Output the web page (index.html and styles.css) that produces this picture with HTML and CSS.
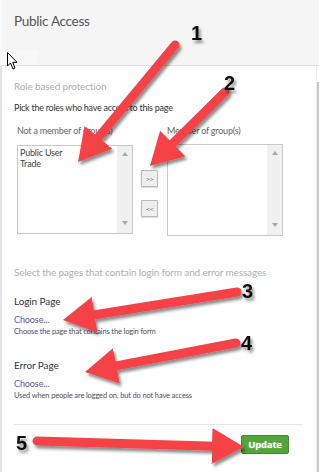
FILE: index.html
```html
<!DOCTYPE html>
<html>
<head>
<meta charset="utf-8">
<link rel="stylesheet" href="styles.css">
</head>
<body>
<div class="page">
  <header class="hd"><h1 class="title">Public Access</h1></header>
  <div class="main">
    <div class="content">
      <div class="section-title">Role based protection</div>
      <div class="intro">Pick the roles who have access to this page</div>
      <div class="groups">
        <div class="col">
          <div class="col-label">Not a member of group(s)</div>
          <div class="listbox lb-left">
            <div class="items">
              <div class="item">Public User</div>
              <div class="item">Trade</div>
            </div>
            <div class="sb"><span class="up"></span><span class="down"></span></div>
          </div>
        </div>
        <div class="moves">
          <button class="mv">&gt;&gt;</button>
          <button class="mv">&lt;&lt;</button>
        </div>
        <div class="col">
          <div class="col-label">Member of group(s)</div>
          <div class="listbox lb-right">
            <div class="items"></div>
            <div class="sb"><span class="up"></span><span class="down"></span></div>
          </div>
        </div>
      </div>
      <div class="section-title st2">Select the pages that contain login form and error messages</div>
      <div class="field">
        <div class="field-label">Login Page</div>
        <div class="choose">Choose...</div>
        <div class="help">Choose the page that contains the login form</div>
      </div>
      <div class="field f2">
        <div class="field-label">Error Page</div>
        <div class="choose">Choose...</div>
        <div class="help">Used when people are logged on, but do not have access</div>
      </div>
      <hr class="rule">
      <div class="actions"><button class="update">Update</button></div>
    </div>
    <div class="track"><div class="thumb"></div></div>
  </div>

  <div class="ghost"></div>
  <svg class="overlay" width="319" height="472" viewBox="0 0 319 472">
    <defs>
      <filter id="sh" x="-20%" y="-20%" width="140%" height="140%">
        <feDropShadow dx="2" dy="3" stdDeviation="1.8" flood-color="#000" flood-opacity="0.45"/>
      </filter>
      <marker id="head" viewBox="0 0 32 36" refX="12" refY="18" markerWidth="32" markerHeight="36" markerUnits="userSpaceOnUse" orient="auto">
        <path d="M0,0 L32,18 L0,36 z" fill="#f44347"/>
      </marker>
    </defs>
    <g filter="url(#sh)" stroke="#f44347" stroke-width="9" stroke-linecap="round" fill="none">
      <line x1="175" y1="45" x2="90.8" y2="146.6" marker-end="url(#head)"/>
      <line x1="225" y1="92" x2="164.2" y2="152" marker-end="url(#head)"/>
      <line x1="237" y1="292" x2="82.7" y2="316.8" marker-end="url(#head)"/>
      <line x1="236" y1="343" x2="104.6" y2="368.2" marker-end="url(#head)"/>
      <line x1="37" y1="441" x2="224" y2="446.4" marker-end="url(#head)"/>
    </g>
    <g filter="url(#sh)" class="nums">
      <text x="191" y="40">1</text>
      <text x="224" y="90">2</text>
      <text x="242" y="298">3</text>
      <text x="241" y="350">4</text>
      <text x="16" y="450">5</text>
    </g>
    <path class="cursor" d="M7.5,52.5 L7.5,66 L10.5,63 L13,69 L15,68 L12.7,62.3 L17,62.3 Z"/>
  </svg>
</div>
</body>
</html>
```

FILE: styles.css
```css
* { box-sizing: border-box; }
html, body { margin: 0; padding: 0; background: #fff; }
body { width: 319px; height: 472px; overflow: hidden; font-family: "Lato", "Open Sans", sans-serif; }

.page { position: relative; width: 319px; height: 472px; }

.hd {
  height: 66px;
  background: #f5f5f5;
  border-bottom: 1px solid #dedede;
  border-left: 2px solid #fafafa;
  padding: 12px 0 0 12px;
}
.title {
  margin: 0;
  font-weight: normal;
  font-size: 13.5px;
  line-height: 18px;
  color: #555;
  letter-spacing: -0.3px;
}

.main { display: flex; height: 406px; border-left: 2px solid #e4e4e4; }
.content { flex: 1; padding: 13px 13px 0 12px; }
.track { width: 3px; border-left: 1px solid #ececec; padding-top: 16px; }
.thumb { width: 2px; height: 100%; background: #c8c8c8; }

.section-title {
  font-size: 10px;
  line-height: 14px;
  color: #b0b0b0;
  letter-spacing: -0.15px;
}
.intro {
  margin-top: 9px;
  font-size: 9px;
  line-height: 12px;
  color: #333;
  letter-spacing: -0.25px;
}

.groups { display: flex; align-items: flex-start; margin-top: 11px; padding-left: 3px; }
.col { display: flex; flex-direction: column; }
.col-label { font-size: 9px; line-height: 12px; color: #666; letter-spacing: -0.2px; }
.listbox {
  display: flex;
  width: 116px;
  border: 1px solid #c9c9c9;
  background: #fff;
  margin-top: 7px;
}
.lb-left { height: 89px; margin-top: 8px; }
.lb-right { height: 92px; }
.items { flex: 1; padding: 1px 2px; }
.item { font-size: 9px; line-height: 11px; color: #444; letter-spacing: -0.2px; }
.sb {
  width: 15px;
  background: #f0f0f0;
  display: flex;
  flex-direction: column;
  justify-content: space-between;
  align-items: center;
  padding: 6px 0 8px;
}
.up, .down { width: 0; height: 0; border-left: 3.5px solid transparent; border-right: 3.5px solid transparent; }
.up { border-bottom: 4px solid #a8a8a8; }
.down { border-top: 4px solid #a8a8a8; }

.moves { display: flex; flex-direction: column; gap: 13px; margin: 45px 9px 0 8px; }
.mv {
  width: 17px;
  height: 17px;
  padding: 0;
  border: 1px solid #b8b8b8;
  border-radius: 1px;
  background: #eeeeee;
  box-shadow: 0 1px 1px rgba(0,0,0,0.15);
  font-family: "DejaVu Sans", sans-serif;
  font-size: 5px;
  letter-spacing: -0.5px;
  color: #777;
}

.st2 { margin-top: 30px; font-size: 10px; line-height: 13px; letter-spacing: -0.15px; }

.field { margin-top: 16px; }
.f2 { margin-top: 22px; }
.field-label { font-size: 10px; line-height: 12px; color: #333; letter-spacing: -0.1px; }
.choose { margin-top: 7px; font-size: 9px; line-height: 12px; color: #5a5aa6; letter-spacing: -0.1px; }
.help { margin-top: 1px; font-size: 7.5px; line-height: 10px; color: #4b4b6b; letter-spacing: -0.15px; }

.rule { margin: 23px 0 0; border: 0; border-top: 1px solid #e6e6e6; }
.actions { display: flex; justify-content: flex-end; margin-top: 10px; padding-right: 14px; }
.update {
  width: 48px;
  height: 19px;
  padding: 0;
  border: 1px solid #3f8a2b;
  border-radius: 2px;
  background: #55a33c;
  color: #fff;
  font-family: "Open Sans", "Lato", sans-serif;
  font-weight: bold;
  font-size: 9.5px;
  letter-spacing: -0.2px;
  text-shadow: 0 0 2px rgba(255,255,255,0.4);
}

.ghost {
  position: absolute;
  left: 0;
  top: 50px;
  width: 38px;
  height: 15px;
  background: #f8f8f8;
}
.overlay { position: absolute; left: 0; top: 0; pointer-events: none; }
.nums text { font-family: "Liberation Sans", Arial, sans-serif; font-weight: bold; font-size: 20px; fill: #111; }
.cursor { fill: #fff; stroke: #000; stroke-width: 1; stroke-linejoin: miter; }
```
